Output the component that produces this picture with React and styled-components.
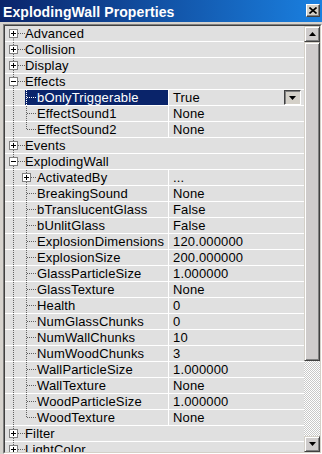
import React from 'react';
import styled, { createGlobalStyle } from 'styled-components';

const Global = createGlobalStyle`
  html, body { margin: 0; padding: 0; background: #d4d0c8; }
  body { font-family: "Liberation Sans", Arial, sans-serif; }
`;

const Window = styled.div`
  width: 322px;
  height: 454px;
  display: flex;
  flex-direction: column;
  background: #d6d3ce;
  overflow: hidden;
`;

const TitleBar = styled.div`
  height: 22px;
  flex: none;
  display: flex;
  align-items: flex-start;
  justify-content: space-between;
  padding: 0 2px 0 3px;
  background: linear-gradient(to right, #0a246a, #1a80e0);
`;

const Title = styled.span`
  margin-top: 4px;
  color: #fff;
  font: bold 14px/16px "Liberation Sans", Arial, sans-serif;
  letter-spacing: 0.1px;
  white-space: nowrap;
`;

const CloseButton = styled.div`
  margin-top: 4px;
  width: 14px;
  height: 13px;
  box-sizing: border-box;
  background: #d4d0c8;
  border: 1px solid;
  border-color: #fff #404040 #404040 #fff;
  box-shadow: inset -1px -1px #808080;
  display: flex;
  align-items: center;
  justify-content: center;
`;

const Body = styled.div`
  flex: 1;
  min-height: 0;
  display: flex;
  padding: 2px 0 0 3px;
`;

const ListFrame = styled.div`
  flex: 1;
  display: flex;
  min-width: 0;
  border: 1px solid;
  border-color: #808080 #fff #fff #808080;
`;

const ListInner = styled.div`
  flex: 1;
  display: flex;
  min-width: 0;
  border: 1px solid;
  border-color: #404040 #d4d0c8 #d4d0c8 #404040;
`;

const Rows = styled.div`
  flex: 1;
  min-width: 0;
  display: flex;
  flex-direction: column;
  overflow: hidden;
  background: #e0e0e0;
`;

const Row = styled.div`
  flex: none;
  display: flex;
  height: 16px;
  box-sizing: border-box;
  border-bottom: 1px solid #fff;
`;

const NameCell = styled.div`
  width: 163px;
  flex: none;
  height: 15px;
  display: flex;
  overflow: hidden;
`;

const TreeSvg = styled.svg`
  flex: none;
  display: block;
  overflow: visible;
`;

const Label = styled.div`
  flex: 1;
  min-width: 0;
  display: flex;
  background: ${p => (p.$selected ? '#0a246a' : 'transparent')};
  color: ${p => (p.$selected ? '#fff' : '#000')};
`;

const Text = styled.span`
  font-size: 13px;
  line-height: 15px;
  letter-spacing: 0.15px;
  white-space: nowrap;
`;

const ValueCell = styled.div`
  flex: 1;
  min-width: 0;
  display: flex;
  align-items: flex-start;
  height: 15px;
  padding-left: 4px;
  border-left: 1px solid ${p => (p.$divider ? '#fff' : 'transparent')};
  color: #000;
`;

const DropButton = styled.div`
  margin-left: auto;
  margin-right: 3px;
  width: 17px;
  height: 15px;
  box-sizing: border-box;
  border: 1px solid;
  border-color: #404040 #fff #fff #404040;
  box-shadow: inset 1px 1px #808080;
  background: #d4d0c8;
  display: flex;
  align-items: center;
  justify-content: center;
`;

const Scrollbar = styled.div`
  width: 16px;
  flex: none;
  display: flex;
  flex-direction: column;
`;

const ScrollButton = styled.div`
  width: 16px;
  height: 16px;
  flex: none;
  box-sizing: border-box;
  background: #cfcccc;
  border: 1px solid;
  border-color: #d4d0c8 #404040 #404040 #d4d0c8;
  box-shadow: inset 1px 1px #fff, inset -1px -1px #808080;
  display: flex;
  align-items: center;
  justify-content: center;
`;

const Thumb = styled(ScrollButton)`
  height: ${p => p.$h}px;
`;

const Track = styled.div`
  flex: 1;
  background: repeating-conic-gradient(#c8c8c8 0 25%, #ffffff 0 50%) 0 0 / 2px 2px;
`;

const DOT = '#606060';

function RootGutter({ box, first }) {
  return (
    <TreeSvg width="20" height="15" viewBox="0 0 20 15">
      <line x1="8.5" y1={first ? 7.5 : 0} x2="8.5" y2="16" stroke={DOT} strokeDasharray="1 1" />
      <line x1="13" y1="7.5" x2="20" y2="7.5" stroke={DOT} strokeDasharray="1 1" />
      <rect x="4.5" y="3.5" width="8" height="8" fill="#fff" stroke="#808080" />
      <line x1="6" y1="7.5" x2="11" y2="7.5" stroke="#000" />
      {box === 'plus' && <line x1="8.5" y1="5" x2="8.5" y2="10" stroke="#000" />}
    </TreeSvg>
  );
}

function ChildGutter() {
  return (
    <TreeSvg width="20" height="15" viewBox="0 0 20 15">
      <line x1="8.5" y1="0" x2="8.5" y2="16" stroke={DOT} strokeDasharray="1 1" />
    </TreeSvg>
  );
}

function ChildConnector({ last, box, selected }) {
  const c = selected ? '#fff' : DOT;
  return (
    <TreeSvg width="12" height="15" viewBox="0 0 12 15">
      <line x1="1.5" y1="0" x2="1.5" y2={last ? 8 : 16} stroke={c} strokeDasharray="1 1" />
      <line x1={box ? 6 : 2} y1="7.5" x2="12" y2="7.5" stroke={c} strokeDasharray="1 1" />
      {box && (
        <>
          <rect x="-2.5" y="3.5" width="8" height="8" fill="#fff" stroke="#808080" />
          <line x1="-1" y1="7.5" x2="4" y2="7.5" stroke="#000" />
          <line x1="1.5" y1="5" x2="1.5" y2="10" stroke="#000" />
        </>
      )}
    </TreeSvg>
  );
}

const rows = [
  { level: 0, name: 'Advanced', box: 'plus' },
  { level: 0, name: 'Collision', box: 'plus' },
  { level: 0, name: 'Display', box: 'plus' },
  { level: 0, name: 'Effects', box: 'minus' },
  { level: 1, name: 'bOnlyTriggerable', value: 'True', selected: true },
  { level: 1, name: 'EffectSound1', value: 'None' },
  { level: 1, name: 'EffectSound2', value: 'None', last: true },
  { level: 0, name: 'Events', box: 'plus' },
  { level: 0, name: 'ExplodingWall', box: 'minus' },
  { level: 1, name: 'ActivatedBy', value: '...', box: true },
  { level: 1, name: 'BreakingSound', value: 'None' },
  { level: 1, name: 'bTranslucentGlass', value: 'False' },
  { level: 1, name: 'bUnlitGlass', value: 'False' },
  { level: 1, name: 'ExplosionDimensions', value: '120.000000' },
  { level: 1, name: 'ExplosionSize', value: '200.000000' },
  { level: 1, name: 'GlassParticleSize', value: '1.000000' },
  { level: 1, name: 'GlassTexture', value: 'None' },
  { level: 1, name: 'Health', value: '0' },
  { level: 1, name: 'NumGlassChunks', value: '0' },
  { level: 1, name: 'NumWallChunks', value: '10' },
  { level: 1, name: 'NumWoodChunks', value: '3' },
  { level: 1, name: 'WallParticleSize', value: '1.000000' },
  { level: 1, name: 'WallTexture', value: 'None' },
  { level: 1, name: 'WoodParticleSize', value: '1.000000' },
  { level: 1, name: 'WoodTexture', value: 'None', last: true },
  { level: 0, name: 'Filter', box: 'plus' },
  { level: 0, name: 'LightColor', box: 'plus' },
];

const Arrow = ({ dir }) => (
  <svg width="7" height="4" viewBox="0 0 7 4">
    {dir === 'up' ? <path d="M3.5 0 L7 4 L0 4 Z" fill="#000" /> : <path d="M0 0 L7 0 L3.5 4 Z" fill="#000" />}
  </svg>
);

export default function App() {
  return (
    <>
      <Global />
      <Window>
        <TitleBar>
          <Title>ExplodingWall Properties</Title>
          <CloseButton>
            <svg width="8" height="7" viewBox="0 0 8 7">
              <path d="M0.5 0.5 L7.5 6.5 M7.5 0.5 L0.5 6.5" stroke="#000" strokeWidth="1.6" />
            </svg>
          </CloseButton>
        </TitleBar>
        <Body>
          <ListFrame>
            <ListInner>
              <Rows>
                {rows.map((r, i) => (
                  <Row key={r.name}>
                    <NameCell>
                      {r.level === 0 ? <RootGutter box={r.box} first={i === 0} /> : <ChildGutter />}
                      <Label $selected={r.selected}>
                        {r.level === 1 && <ChildConnector last={r.last} box={r.box} selected={r.selected} />}
                        <Text>{r.name}</Text>
                      </Label>
                    </NameCell>
                    <ValueCell $divider={r.level === 1}>
                      {r.value && <Text>{r.value}</Text>}
                      {r.selected && (
                        <DropButton>
                          <Arrow dir="down" />
                        </DropButton>
                      )}
                    </ValueCell>
                  </Row>
                ))}
              </Rows>
              <Scrollbar>
                <ScrollButton><Arrow dir="up" /></ScrollButton>
                <Thumb $h={319} />
                <Track />
                <ScrollButton><Arrow dir="down" /></ScrollButton>
              </Scrollbar>
            </ListInner>
          </ListFrame>
        </Body>
      </Window>
    </>
  );
}
